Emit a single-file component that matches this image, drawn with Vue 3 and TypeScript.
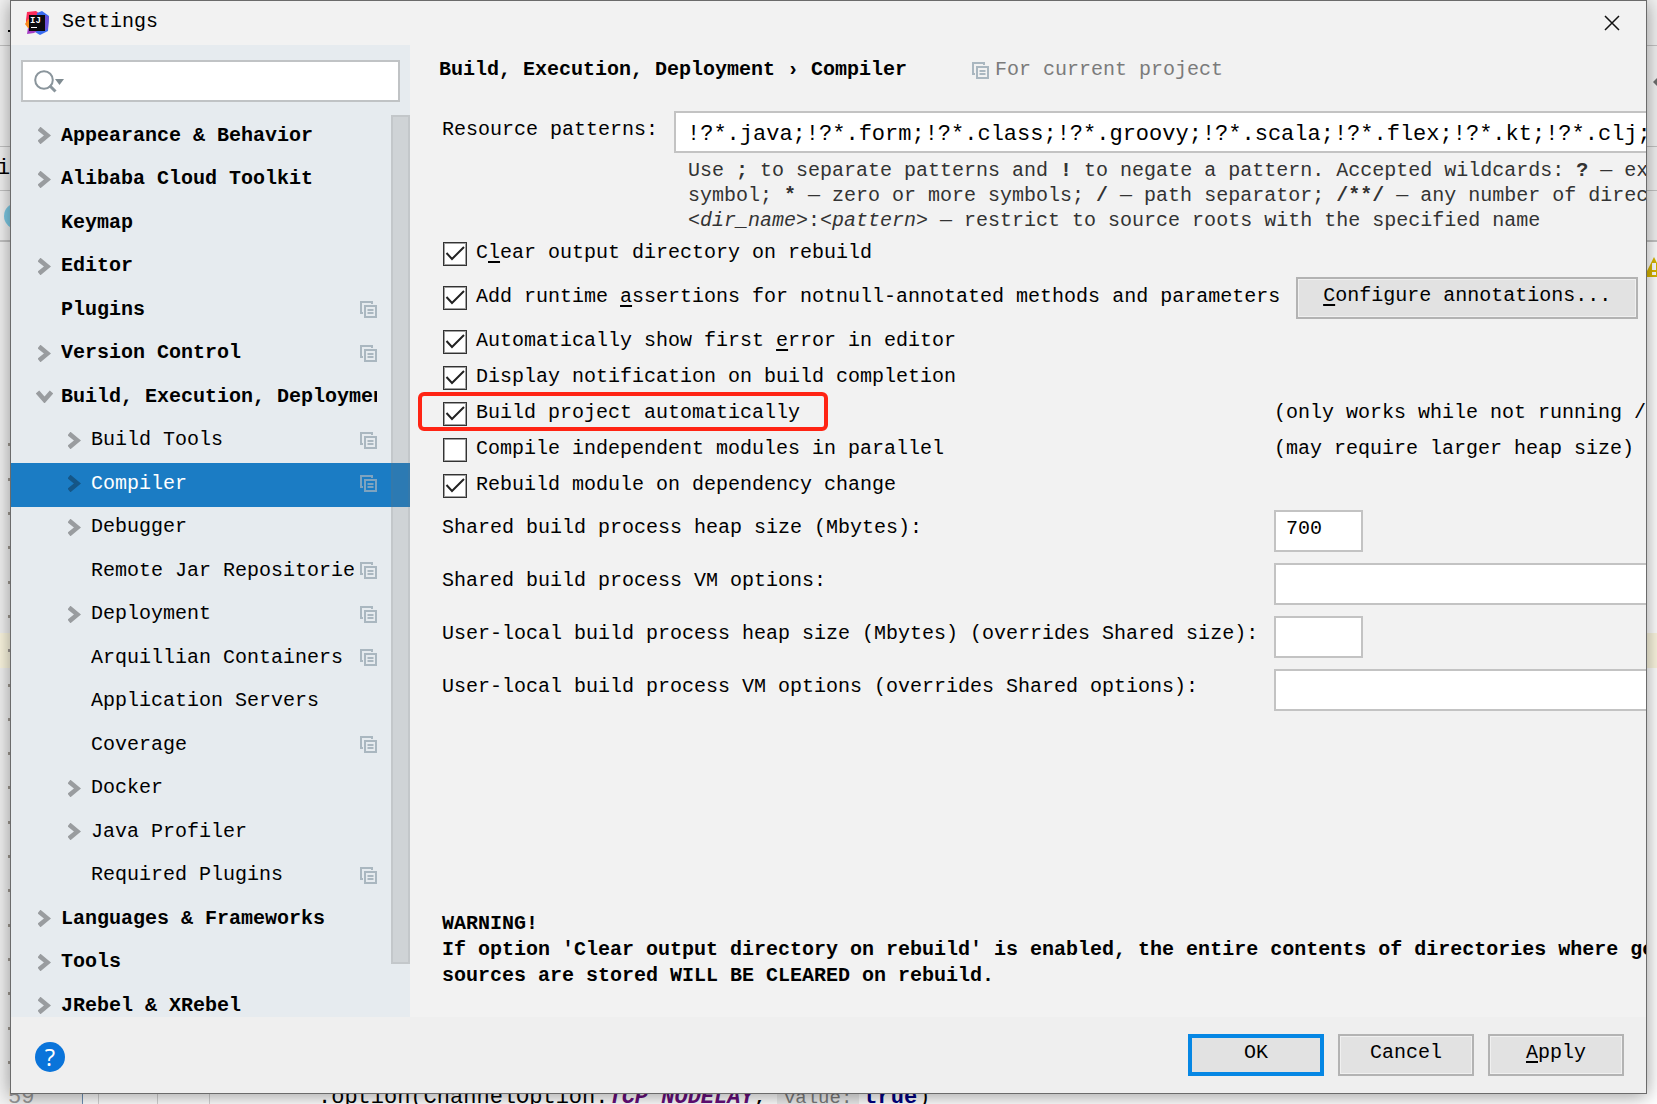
<script setup lang="ts">
import { reactive, ref } from 'vue'

interface TreeItem {
  label: string
  level: 1 | 2
  arrow?: 'closed' | 'open'
  project?: boolean
}

interface Option {
  id: string
  before: string
  key: string
  after: string
  checked: boolean
  note?: string
  button?: boolean
  marked?: boolean
}

interface Field {
  id: string
  label: string
  value: string
  wide: boolean
}

const tree: TreeItem[] = [
  { label: 'Appearance & Behavior', level: 1, arrow: 'closed' },
  { label: 'Alibaba Cloud Toolkit', level: 1, arrow: 'closed' },
  { label: 'Keymap', level: 1 },
  { label: 'Editor', level: 1, arrow: 'closed' },
  { label: 'Plugins', level: 1, project: true },
  { label: 'Version Control', level: 1, arrow: 'closed', project: true },
  { label: 'Build, Execution, Deployment', level: 1, arrow: 'open' },
  { label: 'Build Tools', level: 2, arrow: 'closed', project: true },
  { label: 'Compiler', level: 2, arrow: 'closed', project: true },
  { label: 'Debugger', level: 2, arrow: 'closed' },
  { label: 'Remote Jar Repositories', level: 2, project: true },
  { label: 'Deployment', level: 2, arrow: 'closed', project: true },
  { label: 'Arquillian Containers', level: 2, project: true },
  { label: 'Application Servers', level: 2 },
  { label: 'Coverage', level: 2, project: true },
  { label: 'Docker', level: 2, arrow: 'closed' },
  { label: 'Java Profiler', level: 2, arrow: 'closed' },
  { label: 'Required Plugins', level: 2, project: true },
  { label: 'Languages & Frameworks', level: 1, arrow: 'closed' },
  { label: 'Tools', level: 1, arrow: 'closed' },
  { label: 'JRebel & XRebel', level: 1, arrow: 'closed' },
]

const selected = ref('Compiler')
const search = ref('')
const patterns = ref('!?*.java;!?*.form;!?*.class;!?*.groovy;!?*.scala;!?*.flex;!?*.kt;!?*.clj;!?*.aj')

const options = reactive<Option[]>([
  { id: 'clear', before: 'C', key: 'l', after: 'ear output directory on rebuild', checked: true },
  { id: 'assert', before: 'Add runtime ', key: 'a', after: 'ssertions for notnull-annotated methods and parameters', checked: true, button: true },
  { id: 'error', before: 'Automatically show first ', key: 'e', after: 'rror in editor', checked: true },
  { id: 'notify', before: 'Display notification on build completion', key: '', after: '', checked: true },
  { id: 'auto', before: 'Build project automatically', key: '', after: '', checked: true, note: '(only works while not running / debugging)', marked: true },
  { id: 'parallel', before: 'Compile independent modules in parallel', key: '', after: '', checked: false, note: '(may require larger heap size)' },
  { id: 'rebuild', before: 'Rebuild module on dependency change', key: '', after: '', checked: true },
])

const fields = reactive<Field[]>([
  { id: 'heap', label: 'Shared build process heap size (Mbytes):', value: '700', wide: false },
  { id: 'vm', label: 'Shared build process VM options:', value: '', wide: true },
  { id: 'user-heap', label: 'User-local build process heap size (Mbytes) (overrides Shared size):', value: '', wide: false },
  { id: 'user-vm', label: 'User-local build process VM options (overrides Shared options):', value: '', wide: true },
])

const editorLines = Array.from({ length: 24 }, (_, i) => i + 35)
</script>

<template>
  <div class="desktop">
    <div class="editor" aria-hidden="true">
      <div class="bar bar-menu"></div>
      <div class="bar bar-tools">
        <svg class="diamond" width="4" height="8" viewBox="0 0 4 8"><path d="M4 0 0 4l4 4z" fill="#6e6e6e" /></svg>
      </div>
      <div class="bar bar-nav">ic</div>
      <div class="bar bar-tabs"><span class="disc"></span></div>
      <div class="lines">
        <svg class="warn" width="22" height="20" viewBox="0 0 22 20">
          <path d="M8 0 18 20H0V16z" fill="#d9b600" />
          <path d="M6 6h4v7H6zM6 15h4v3H6z" fill="#fff" />
        </svg>
        <div v-for="n in editorLines" :key="n" class="line" :class="{ current: n === 46, tick: n > 39 }"></div>
      </div>
      <div class="code-row">
        <span class="number">59</span>
        <span class="guides"><i></i><i></i><i></i><i></i></span>
        <code class="code">.option(ChannelOption.<b class="const">TCP_NODELAY</b>,</code>
        <span class="inlay">value:</span>
        <code class="code"><b class="keyword">true</b>)</code>
      </div>
    </div>

    <section class="dialog" role="dialog" aria-labelledby="dialog-title">
      <header class="titlebar">
        <svg class="logo" width="24" height="24" viewBox="0 0 24 24">
          <path d="M2 1 11 0l5 4-3 9-12 1L1 9z" fill="#fc2d5c" />
          <path d="M0 13 3 8l5 3-1 7-4-1z" fill="#f98a1d" />
          <path d="m12 2 5-2 7 5-1 15-8 4-5-3z" fill="#3a6cf0" />
          <path d="m20 4 4 2-1 11-3 3z" fill="#6a50d8" />
          <path d="m3 17 9 3-3 2-7 1z" fill="#a43bc4" />
          <path d="M4 4h16v16H4z" fill="#0b0b0d" />
          <text x="5" y="12" font-size="9" font-weight="700" fill="#fff" font-family="Liberation Mono, monospace">IJ</text>
          <path d="M6 16h6v1H6z" fill="#fff" />
        </svg>
        <h1 id="dialog-title" class="title">Settings</h1>
        <button class="close" type="button" aria-label="Close">
          <svg width="16" height="16" viewBox="0 0 16 16"><path d="m1 1 14 14M15 1 1 15" stroke="#111" stroke-width="1.5" fill="none" /></svg>
        </button>
      </header>

      <div class="body">
        <aside class="sidebar">
          <label class="search">
            <svg width="31" height="24" viewBox="0 0 31 24">
              <circle cx="10" cy="11" r="8.8" fill="none" stroke="#8a959c" stroke-width="2" />
              <path d="m15.500 16.500 6 6" stroke="#8a959c" stroke-width="3" />
              <path d="M21 10h9l-4.500 6z" fill="#7f8b91" />
            </svg>
            <input v-model="search" type="text" aria-label="Search settings" />
          </label>
          <div class="tree-area">
            <ul class="tree" role="tree">
              <li
                v-for="item in tree"
                :key="item.label"
                class="node"
                :class="['level-' + item.level, { selected: item.label === selected }]"
                role="treeitem"
                :aria-selected="item.label === selected"
                @click="selected = item.label"
              >
                <span class="arrow">
                  <svg v-if="item.arrow === 'closed'" width="13" height="17" viewBox="0 0 13 17"><path d="m1 1.500 8.500 7-8.500 7" fill="none" stroke="currentColor" stroke-width="4.600" /></svg>
                  <svg v-else-if="item.arrow === 'open'" class="open" width="17" height="13" viewBox="0 0 17 13"><path d="m1.500 2 7 8 7-8" fill="none" stroke="currentColor" stroke-width="4.600" /></svg>
                </span>
                <span class="label">{{ item.label }}</span>
                <svg v-if="item.project" class="copy" width="17" height="17" viewBox="0 0 17 17">
                  <path d="M3 12H1V1h11v2M5 5h11v11H5zM7.500 9h6M7.500 12h6" fill="none" stroke="currentColor" stroke-width="2" />
                </svg>
              </li>
            </ul>
            <div class="scrollbar"></div>
          </div>
        </aside>

        <main class="page">
          <div class="crumbs">
            <h2 class="crumb">Build, Execution, Deployment › Compiler</h2>
            <svg class="copy" width="17" height="17" viewBox="0 0 17 17">
              <path d="M3 12H1V1h11v2M5 5h11v11H5zM7.500 9h6M7.500 12h6" fill="none" stroke="currentColor" stroke-width="2" />
            </svg>
            <span class="scope">For current project</span>
          </div>

          <div class="patterns">
            <label class="patterns-label" for="patterns">Resource patterns:</label>
            <div class="patterns-field">
              <input id="patterns" v-model="patterns" class="box" type="text" />
              <p class="hint">
                Use <b>;</b> to separate patterns and <b>!</b> to negate a pattern. Accepted wildcards: <b>?</b> — exactly one<br />
                symbol; <b>*</b> — zero or more symbols; <b>/</b> — path separator; <b>/**/</b> — any number of directories;<br />
                <i>&lt;dir_name&gt;</i>:<i>&lt;pattern&gt;</i> — restrict to source roots with the specified name
              </p>
            </div>
          </div>

          <div class="options">
            <div v-for="o in options" :key="o.id" class="option" :class="{ tall: o.button }">
              <label class="check" :class="{ marked: o.marked, natural: o.button }">
                <span class="tickbox">
                  <input v-model="o.checked" type="checkbox" />
                  <svg v-if="o.checked" width="24" height="24" viewBox="0 0 24 24"><path d="m3.500 11 5.500 6L21 5" fill="none" stroke="#222" stroke-width="2" /></svg>
                </span>
                <span class="check-text">{{ o.before }}<u v-if="o.key">{{ o.key }}</u>{{ o.after }}</span>
              </label>
              <button v-if="o.button" class="button configure" type="button"><span><u>C</u>onfigure annotations...</span></button>
              <span v-if="o.note" class="note">{{ o.note }}</span>
            </div>
          </div>

          <div class="fields">
            <div v-for="f in fields" :key="f.id" class="field">
              <label :for="f.id">{{ f.label }}</label>
              <input :id="f.id" v-model="f.value" class="box" :class="{ wide: f.wide }" type="text" />
            </div>
          </div>

          <p class="warning">
            WARNING!<br />
            If option 'Clear output directory on rebuild' is enabled, the entire contents of directories where generated<br />
            sources are stored WILL BE CLEARED on rebuild.
          </p>
        </main>
      </div>

      <footer class="footer">
        <button class="help" type="button" aria-label="Help"><span>?</span></button>
        <button class="button primary" type="button"><span>OK</span></button>
        <button class="button" type="button"><span>Cancel</span></button>
        <button class="button" type="button"><span><u>A</u>pply</span></button>
      </footer>
    </section>
  </div>
</template>

<style>
body {
  margin: 0;
}
</style>

<style scoped>
.desktop {
  position: relative;
  height: 100vh;
  overflow: hidden;
  font: 20px/26px "Liberation Mono", "Courier New", monospace;
  color: #000;
}

.desktop * {
  box-sizing: border-box;
}

button,
input {
  font: inherit;
  color: inherit;
  border-radius: 0;
}

h1,
h2,
p,
ul {
  margin: 0;
  padding: 0;
  font-size: inherit;
}

u {
  text-underline-offset: 3px;
}

/* editor window behind the dialog */
.editor {
  display: flex;
  flex-direction: column;
  height: 100%;
  background: #fff;
}

.bar {
  display: flex;
  align-items: center;
  flex: none;
  background: #f2f2f2;
  border-bottom: 1px solid #c4c4c4;
}

.bar-menu {
  height: 46px;
}

.bar-menu::before {
  content: "";
  width: 3px;
  height: 16px;
  margin-left: 8px;
  border-bottom: 2px solid #000;
}

.bar-tools {
  height: 101px;
  justify-content: flex-end;
  padding-bottom: 28px;
}

.bar-nav {
  height: 44px;
  font-size: 22px;
  text-indent: -3px;
}

.bar-tabs {
  height: 51px;
  border-bottom-width: 2px;
}

.disc {
  width: 26px;
  height: 26px;
  margin-left: 4px;
  border-radius: 50%;
  background: #7ecbe6;
}

.lines {
  display: flex;
  flex: 1;
  flex-direction: column;
  min-height: 0;
  padding-top: 14px;
  position: relative;
  background: linear-gradient(90deg, #f2f2f2 82px, #fff 82px);
}

.warn {
  position: absolute;
  right: -11px;
  top: 15px;
}

.line {
  flex: 1;
}

.line.tick::before {
  content: "";
  display: block;
  width: 2px;
  height: 3px;
  margin: 16px 0 0 8px;
  background: #a09a92;
}

.line.current {
  background: #fcf7e0;
}

.code-row {
  display: flex;
  flex: none;
  height: 25px;
  overflow: hidden;
  font-size: 22px;
  line-height: 38px;
  white-space: pre;
}

.number {
  width: 82px;
  padding-left: 8px;
  color: #999;
  background: #f2f2f2;
}

.guides {
  display: flex;
  width: 236px;
  gap: 51px;
}

.guides i {
  width: 1px;
  background: #d3d3d3;
}

.guides i:first-child {
  margin-right: -36px;
  background: #6d8fb5;
}

.guides i:nth-child(2) {
  margin-right: 7px;
}

.code {
  font: inherit;
}

.const {
  color: #660e7a;
  font-style: italic;
}

.keyword {
  color: #000080;
}

.inlay {
  margin: 0 5px 0 10px;
  padding: 0 7px;
  font-size: 19px;
  color: #7a7a7a;
  background: #ededed;
}

/* dialog */
.dialog {
  position: absolute;
  inset: 0 10px 10px;
  display: flex;
  flex-direction: column;
  overflow: hidden;
  border: 1px solid #6b6b6b;
  background: #f2f2f2;
  box-shadow: 0 2px 18px rgba(0, 0, 0, 0.4);
}

.titlebar {
  display: flex;
  flex: none;
  align-items: center;
  height: 44px;
  padding: 0 20px 0 14px;
}

.title {
  flex: 1;
  padding: 0 0 3px 13px;
  font-weight: 400;
}

.close {
  display: flex;
  padding: 6px;
  border: 0;
  background: none;
}

.body {
  display: flex;
  flex: 1;
  min-height: 0;
}

/* sidebar */
.sidebar {
  display: flex;
  flex: none;
  flex-direction: column;
  width: 399px;
  background: #e6ebef;
}

.search {
  display: flex;
  flex: none;
  align-items: center;
  height: 42px;
  margin: 15px 10px 13px;
  padding: 0 11px;
  border: 2px solid #c0c3c5;
  background: #fff;
}

.search input {
  flex: 1;
  min-width: 0;
  margin-left: 4px;
  border: 0;
  outline: 0;
  background: none;
}

.tree-area {
  position: relative;
  flex: 1;
  min-height: 0;
  overflow: hidden;
}

.tree {
  list-style: none;
}

.node {
  display: flex;
  align-items: center;
  height: 43px;
  padding: 0 33px 3px 25px;
}

.node:nth-child(odd) {
  height: 44px;
}

.level-1 {
  font-weight: 700;
}

.level-2 {
  padding-left: 55px;
}

.arrow {
  display: flex;
  flex: none;
  width: 25px;
  padding-left: 2px;
  color: #999c9f;
}

.open {
  margin-left: -2px;
}

.label {
  flex: 1;
  min-width: 0;
  overflow: hidden;
  white-space: nowrap;
}

.copy {
  flex: none;
  color: #aab7c0;
}

.node .copy {
  margin-left: 6px;
}

.selected {
  background: #1b7cc4;
  color: #fff;
}

.selected .arrow {
  color: #155687;
}

.selected .copy {
  color: #7ea3bf;
}

.scrollbar {
  position: absolute;
  top: 0;
  right: 0;
  bottom: 53px;
  width: 19px;
  border: 2px solid rgba(115, 115, 115, 0.12);
  background: rgba(115, 115, 115, 0.2);
}

/* settings page */
.page {
  display: flex;
  flex: 1;
  flex-direction: column;
  min-width: 0;
  padding: 12px 0 28px 32px;
  overflow: hidden;
  white-space: nowrap;
}

.crumbs {
  display: flex;
  align-items: center;
  margin: 0 0 28px -3px;
}

.crumb {
  margin-right: 65px;
}

.scope {
  margin-left: 6px;
  color: #7b7b7b;
}

.patterns {
  display: flex;
}

.patterns-label {
  flex: none;
  width: 232px;
  padding-top: 6px;
}

.patterns-field {
  flex: 1;
  min-width: 0;
  margin-right: -20px;
}

.box {
  display: block;
  width: 89px;
  height: 42px;
  padding: 0 10px 6px;
  border: 2px solid #c3c3c3;
  outline: 0;
  background: #fff;
}

.patterns .box {
  width: 100%;
  padding: 5px 11px 0;
  font-size: 22px;
}

.hint {
  padding: 5px 0 0 14px;
  color: #333;
  line-height: 25px;
}

.options {
  padding-top: 3px;
}

.option {
  display: flex;
  align-items: center;
  height: 36px;
}

.option.tall {
  height: 52px;
}

.check {
  position: relative;
  display: flex;
  flex: none;
  align-items: center;
  width: 832px;
}

.check.natural {
  width: auto;
}

.tickbox {
  display: grid;
  margin: 0 9px 0 1px;
}

.tickbox > * {
  grid-area: 1 / 1;
}

.tickbox svg {
  pointer-events: none;
}

.tickbox input {
  width: 24px;
  height: 24px;
  margin: 0;
  appearance: none;
  border: 1px solid #333;
  background: #fff;
  box-shadow: inset 0 0 0 1px #a0a0a0;
}

.check-text,
.note {
  padding-bottom: 2px;
}

.marked::after {
  content: "";
  position: absolute;
  top: -8px;
  left: -24px;
  box-sizing: border-box;
  width: 410px;
  height: 39px;
  border: 4px solid #ff2414;
  border-radius: 6px;
}

.fields {
  display: flex;
  flex-direction: column;
  gap: 11px;
  padding-top: 6px;
}

.field {
  display: flex;
  align-items: center;
}

.field label {
  flex: none;
  width: 832px;
  padding-bottom: 7px;
}

.box.wide {
  flex: 1;
  min-width: 0;
  margin-right: -20px;
}

.warning {
  margin-top: auto;
  font-weight: 700;
}

/* buttons */
.button {
  width: 136px;
  height: 42px;
  padding: 0 0 4px;
  border: 2px solid #b3b3b3;
  background: #e2e2e2;
  box-shadow: inset 0 0 0 1px #f0f0f0;
}

.button.configure {
  width: 342px;
  margin-left: 16px;
}

.button.primary {
  border: 4px solid #0687e4;
  box-shadow: none;
}

.footer {
  display: flex;
  flex: none;
  align-items: center;
  gap: 14px;
  height: 76px;
  padding: 0 22px;
  background: #efefef;
}

.help {
  display: flex;
  align-items: center;
  justify-content: center;
  width: 34px;
  height: 46px;
  margin-right: auto;
  padding: 4px 0 0;
  border: 0;
  background: none;
}

.help span {
  width: 30px;
  height: 30px;
  border-radius: 50%;
  background: #0a74da;
  color: #fff;
  font: 24px/30px "Open Sans", "Noto Sans", sans-serif;
}
</style>
